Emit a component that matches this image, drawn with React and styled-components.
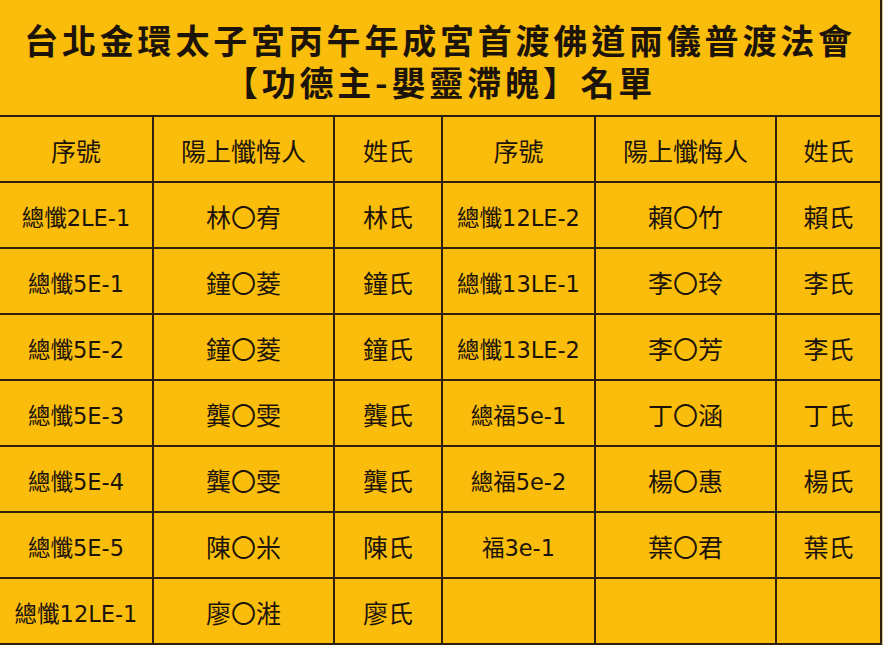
import React from "react";
import styled, { createGlobalStyle } from "styled-components";

const Global = createGlobalStyle`
  html, body { margin: 0; padding: 0; background: #dcc47e; }
  body { font-family: "DejaVu Sans", "Noto Sans CJK TC", "Noto Sans CJK SC", sans-serif; }
`;

const Sheet = styled.div`
  width: 882px;
  box-sizing: border-box;
  background: #fabd0b;
  color: #1c1309;
  display: grid;
  grid-template-columns: 152px 181px 108px 153px 181px 105px;
  grid-template-rows: 115px repeat(8, 66px);
  border-right: 2px solid #2e1f10;
  border-bottom: 2px solid #2e1f10;
`;

const Title = styled.div`
  grid-column: 1 / -1;
  display: flex;
  flex-direction: column;
  align-items: center;
  gap: 0;
  padding-top: 19px;
  box-sizing: border-box;
  font-family: "Noto Sans CJK TC", "Noto Sans CJK SC", sans-serif;
  font-size: 34px;
  font-weight: 700;
  letter-spacing: 3.8px;
  white-space: nowrap;
`;

const TitleLine = styled.div`
  height: 42px;
  line-height: 42px;
`;

const Cell = styled.div`
  box-sizing: border-box;
  border-top: 2px solid #2e1f10;
  border-left: ${(p) => (p.$first ? "none" : "2px solid #2e1f10")};
  display: flex;
  align-items: center;
  justify-content: center;
  font-family: "DejaVu Sans", "Noto Sans CJK TC", "Noto Sans CJK SC", sans-serif;
  font-size: ${(p) => (p.$small ? "22.5px" : "25px")};
  white-space: nowrap;
  padding-top: 1px;
`;

const headers = ["序號", "陽上懺悔人", "姓氏", "序號", "陽上懺悔人", "姓氏"];

const rows = [
  ["總懺2LE-1", "林〇宥", "林氏", "總懺12LE-2", "賴〇竹", "賴氏"],
  ["總懺5E-1", "鐘〇菱", "鐘氏", "總懺13LE-1", "李〇玲", "李氏"],
  ["總懺5E-2", "鐘〇菱", "鐘氏", "總懺13LE-2", "李〇芳", "李氏"],
  ["總懺5E-3", "龔〇雯", "龔氏", "總福5e-1", "丁〇涵", "丁氏"],
  ["總懺5E-4", "龔〇雯", "龔氏", "總福5e-2", "楊〇惠", "楊氏"],
  ["總懺5E-5", "陳〇米", "陳氏", "福3e-1", "葉〇君", "葉氏"],
  ["總懺12LE-1", "廖〇溎", "廖氏", "", "", ""],
];

export default function App() {
  return (
    <>
      <Global />
      <Sheet>
        <Title>
          <TitleLine>台北金環太子宮丙午年成宮首渡佛道兩儀普渡法會</TitleLine>
          <TitleLine>【功德主-嬰靈滯魄】名單</TitleLine>
        </Title>
        {headers.map((h, i) => (
          <Cell key={"h" + i} $first={i === 0}>
            {h}
          </Cell>
        ))}
        {rows.map((r, ri) =>
          r.map((c, ci) => (
            <Cell key={ri + "-" + ci} $first={ci === 0} $small={ci === 0 || ci === 3}>
              {c}
            </Cell>
          ))
        )}
      </Sheet>
    </>
  );
}
